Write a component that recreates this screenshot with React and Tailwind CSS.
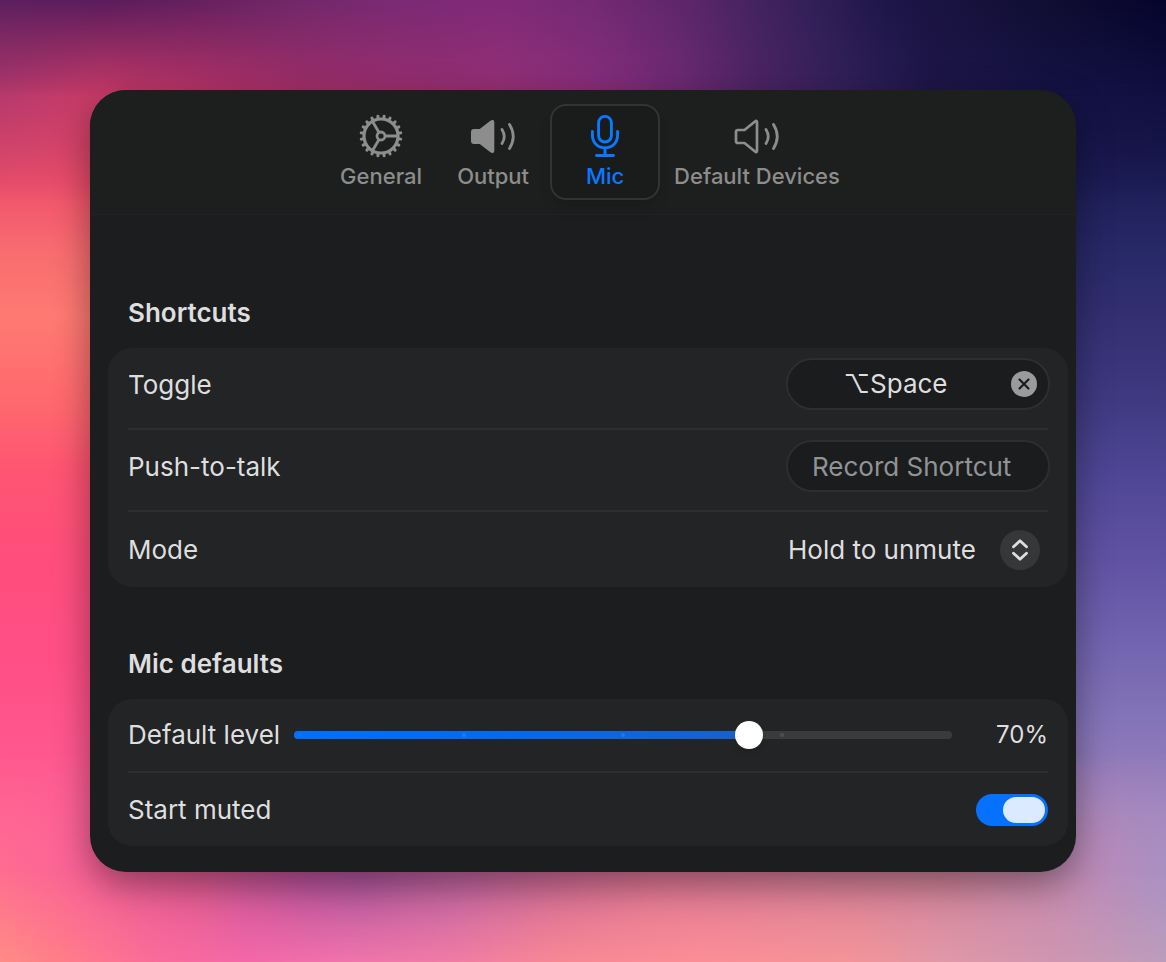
import { useState } from 'react';

const tabs = [
    { id: 'general', label: 'General', icon: GearIcon },
    { id: 'output', label: 'Output', icon: SpeakerFilledIcon },
    { id: 'mic', label: 'Mic', icon: MicIcon },
    { id: 'devices', label: 'Default Devices', icon: SpeakerIcon },
];

// Each layer is a colour ramp that fades in and out along the other axis
const layers = [
    {
        id: 'left',
        vertical: true,
        colors: [[0, '#c83c68'], [0.19, '#ef506a'], [0.26, '#f86c70'], [0.33, '#ff7a72'], [0.42, '#ff686e'], [0.49, '#ff5472'], [0.58, '#ff4e7c'], [0.69, '#ff4f86'], [0.79, '#ff5890'], [0.88, '#ff6498'], [1, '#ff8888']],
        fade: [[0, 1], [1, 1]],
    },
    {
        id: 'right',
        vertical: true,
        colors: [[0, '#0c0a34'], [0.1, '#161346'], [0.19, '#1e1e58'], [0.26, '#272866'], [0.33, '#332f72'], [0.42, '#403a82'], [0.5, '#504796'], [0.58, '#6052a2'], [0.67, '#7264b0'], [0.75, '#8474b8'], [0.83, '#9a80bc'], [0.9, '#b08cbc'], [1, '#bc9cbc']],
        fade: [[0.3, 0], [0.9, 1]],
    },
    {
        id: 'upper',
        colors: [[0, '#b0386c'], [0.09, '#c83a68'], [0.17, '#b83468'], [0.26, '#a02e68'], [0.37, '#962e70'], [0.43, '#963076'], [0.51, '#882e7c'], [0.58, '#702a74'], [0.65, '#4c2464'], [0.73, '#30205a'], [0.8, '#1e1648'], [0.9, '#161346'], [1, '#101040']],
        fade: [[0.08, 1], [0.21, 0]],
    },
    {
        id: 'top',
        colors: [[0, '#5c1f5e'], [0.09, '#5a1c5c'], [0.17, '#64205e'], [0.26, '#72286a'], [0.34, '#7a2a74'], [0.43, '#802a78'], [0.51, '#742a72'], [0.6, '#582668'], [0.69, '#34205a'], [0.76, '#1e1648'], [0.9, '#100e32'], [1, '#06042c']],
        fade: [[0, 1], [0.1, 0]],
    },
    {
        id: 'lower',
        colors: [[0, '#ff6c90'], [0.08, '#f86098'], [0.17, '#dc5890'], [0.26, '#b4509a'], [0.31, '#a8529c'], [0.39, '#b860a0'], [0.47, '#cc6898'], [0.56, '#dc7494'], [0.69, '#d87c98'], [0.81, '#d08098'], [0.9, '#c488ac'], [0.94, '#b98ab8'], [1, '#a890c4']],
        fade: [[0.78, 0], [0.92, 1]],
    },
    {
        id: 'bottom',
        colors: [[0, '#ff8c86'], [0.05, '#ff7e88'], [0.13, '#fa6c98'], [0.21, '#f468a8'], [0.3, '#f074ac'], [0.39, '#f07ca4'], [0.48, '#f88894'], [0.6, '#fc8e96'], [0.73, '#f49498'], [0.81, '#e098a8'], [0.9, '#d096b0'], [1, '#bc9cbc']],
        fade: [[0.9, 0], [1, 1]],
    },
];

function Wallpaper() {
    return (
        <svg className="absolute inset-0 h-full w-full" viewBox="0 0 100 100" preserveAspectRatio="none" aria-hidden="true">
            {layers.map(({ id, vertical, colors, fade }) => (
                <g key={id}>
                    <linearGradient id={`${id}-color`} x1="0" y1="0" x2={vertical ? 0 : 1} y2={vertical ? 1 : 0}>
                        {colors.map(([offset, color]) => (
                            <stop key={offset} offset={offset} stopColor={color} />
                        ))}
                    </linearGradient>
                    <linearGradient id={`${id}-fade`} x1="0" y1="0" x2={vertical ? 1 : 0} y2={vertical ? 0 : 1}>
                        {fade.map(([offset, opacity]) => (
                            <stop key={offset} offset={offset} stopColor="#fff" stopOpacity={opacity} />
                        ))}
                    </linearGradient>
                    <mask id={`${id}-mask`}>
                        <rect width="100" height="100" fill={`url(#${id}-fade)`} />
                    </mask>
                    <rect width="100" height="100" fill={`url(#${id}-color)`} mask={`url(#${id}-mask)`} />
                </g>
            ))}
        </svg>
    );
}

function GearIcon() {
    const teeth = Array.from({ length: 20 }, (_, i) => i * 18 + 9);

    return (
        <svg className="h-11 w-11" viewBox="0 0 44 44" fill="none" stroke="currentColor" aria-hidden="true">
            <circle cx="22" cy="22" r="17" strokeWidth="3.2" />
            {teeth.map((angle) => (
                <path key={angle} d="M22 4.5V2" strokeWidth="3" strokeLinecap="round" transform={`rotate(${angle} 22 22)`} />
            ))}
            <circle cx="22" cy="22" r="4" strokeWidth="2.8" />
            <path d="M26 22H38M20 18.5L13.6 7.5M20 25.5L13.6 36.5" strokeWidth="2.8" />
        </svg>
    );
}

function SpeakerWaves() {
    return (
        <path d="M33 15.500Q37.500 22.500 33 29.500M40.500 10.500Q48 22.500 40.500 34.500" strokeWidth="2.800" strokeLinecap="round" />
    );
}

function SpeakerFilledIcon() {
    return (
        <svg className="h-11 w-12" viewBox="0 0 48 44" fill="none" stroke="currentColor" aria-hidden="true">
            <path d="M5 16H11L22 7.500Q24.300 6 24.300 8.500V36.500Q24.300 39 22 37.500L11 29H5Q3 29 3 27V18Q3 16 5 16Z" fill="currentColor" strokeWidth="2" strokeLinejoin="round" />
            <SpeakerWaves />
        </svg>
    );
}

function SpeakerIcon() {
    return (
        <svg className="h-11 w-12" viewBox="0 0 48 44" fill="none" stroke="currentColor" aria-hidden="true">
            <path d="M5 16H11.500L22 7.500Q24 6 24 8.500V36.500Q24 39 22 37.500L11.500 29H5Q3 29 3 27V18Q3 16 5 16Z" strokeWidth="2.700" strokeLinejoin="round" />
            <SpeakerWaves />
        </svg>
    );
}

function MicIcon() {
    return (
        <svg className="h-11 w-11" viewBox="0 0 44 44" fill="none" stroke="currentColor" strokeWidth="2.9" strokeLinecap="round" aria-hidden="true">
            <rect x="15.600" y="2.400" width="12.800" height="25.600" rx="6.400" />
            <path d="M9.400 17.500V21C9.400 28.500 14.500 33.800 22 33.800S34.600 28.500 34.600 21V17.500M22 34V41M13.500 41.500H30.500" />
        </svg>
    );
}

function Section({ title, children }) {
    return (
        <section>
            <h2 className="px-5 text-[26px] leading-8 font-semibold">{title}</h2>
            <div className="mt-[19px] rounded-3xl bg-[#232426] px-5">{children}</div>
        </section>
    );
}

export default function App() {
    const [activeTab, setActiveTab] = useState('mic');
    const [shortcut, setShortcut] = useState('⌥Space');
    const [level, setLevel] = useState(70);
    const [muted, setMuted] = useState(true);

    return (
        <div className="relative isolate min-h-screen overflow-hidden p-[90px] font-['Inter',sans-serif] text-[#dededf]">
            <Wallpaper />

            <main className="relative overflow-hidden rounded-[36px] bg-[#1c1d1f] pb-[26px] shadow-[0_12px_36px_rgba(0,0,0,0.4)]">
                <nav className="flex justify-center gap-0.5 border-b border-[#212224] bg-[#1d1f1e] pt-[14px] pb-[14px] pl-3" aria-label="Settings">
                    {tabs.map(({ id, label, icon: Icon }) => (
                        <button
                            key={id}
                            onClick={() => setActiveTab(id)}
                            aria-current={activeTab === id ? 'page' : undefined}
                            className={`flex h-24 min-w-[110px] flex-col items-center rounded-2xl border-2 px-[10px] pt-2 text-[22px] leading-7 font-medium ${
                                activeTab === id ? 'border-[#323433] bg-[#1a1c1b] text-[#0a78ff] shadow-lg' : 'border-transparent text-[#8c8d8c]'
                            }`}
                        >
                            <Icon />
                            <span className="mt-1">{label}</span>
                        </button>
                    ))}
                </nav>

                <div className="flex flex-col gap-[61px] pt-[82px] pr-2 pl-[18px]">
                    <Section title="Shortcuts">
                        <div className="flex h-[82px] items-start justify-between border-b-2 border-[#2d2e30] pt-[10px]">
                            <label htmlFor="toggle" className="pt-[11px] text-[26px] leading-8">Toggle</label>
                            <div className="-mr-[2px] flex h-[52px] w-[264px] items-center rounded-full border-2 border-[#2d2e30] bg-[#1b1c1e] pr-[11px] pl-6">
                                <input
                                    id="toggle"
                                    value={shortcut}
                                    readOnly
                                    className="w-full min-w-0 bg-transparent pr-8 text-center text-[26px] leading-8 outline-none"
                                />
                                <button onClick={() => setShortcut('')} aria-label="Clear shortcut" className="shrink-0 text-[#9a9b9b]">
                                    <svg className="h-[26px] w-[26px]" viewBox="0 0 26 26" aria-hidden="true">
                                        <circle cx="13" cy="13" r="13" fill="currentColor" />
                                        <path d="M8.500 8.500L17.500 17.500M17.500 8.500L8.500 17.500" stroke="#1b1c1e" strokeWidth="2.200" strokeLinecap="round" />
                                    </svg>
                                </button>
                            </div>
                        </div>
                        <div className="flex h-[82px] items-start justify-between border-b-2 border-[#2d2e30] pt-[10px]">
                            <label htmlFor="push" className="pt-[11px] text-[26px] leading-8">Push-to-talk</label>
                            <input
                                id="push"
                                placeholder="Record Shortcut"
                                className="-mr-[2px] h-[52px] w-[264px] rounded-full border-2 border-[#2d2e30] bg-[#1b1c1e] pr-6 pl-6 text-[26px] leading-8 outline-none placeholder:text-[#929394]"
                            />
                        </div>
                        <div className="flex h-[75px] items-center justify-between">
                            <label htmlFor="mode" className="text-[26px] leading-8">Mode</label>
                            <div className="relative flex items-center pr-2">
                                <select id="mode" className="appearance-none bg-transparent pr-16 text-[26px] leading-8 outline-none">
                                    <option>Hold to unmute</option>
                                </select>
                                <span className="pointer-events-none absolute right-2 flex h-10 w-10 items-center justify-center rounded-full bg-[#363739]">
                                    <svg className="h-6 w-5" viewBox="0 0 20 24" fill="none" stroke="currentColor" strokeWidth="2.800" strokeLinecap="round" strokeLinejoin="round" aria-hidden="true">
                                        <path d="M3.500 8.800L10 2.800L16.500 8.800M3.500 15.200L10 21.200L16.500 15.200" />
                                    </svg>
                                </span>
                            </div>
                        </div>
                    </Section>

                    <Section title="Mic defaults">
                        <div className="flex h-[74px] items-center border-b-2 border-[#2d2e30]">
                            <label htmlFor="level" className="w-[166px] shrink-0 text-[26px] leading-8">Default level</label>
                            <div className="relative flex h-7 flex-1 items-center">
                                <div className="h-2 w-full overflow-hidden rounded-full bg-[#3a3b3c]">
                                    <div className="h-full bg-linear-to-r from-[#0070ff] via-[#0668ee] to-[#1860c8]" style={{ width: `${level}%` }} />
                                </div>
                                <div className="absolute inset-x-[13px] flex justify-evenly">
                                    <span className="h-1 w-1 rounded-full bg-white/10" />
                                    <span className="h-1 w-1 rounded-full bg-white/10" />
                                    <span className="h-1 w-1 rounded-full bg-white/10" />
                                </div>
                                <input
                                    id="level"
                                    type="range"
                                    value={level}
                                    onChange={(e) => setLevel(Number(e.target.value))}
                                    className="absolute inset-0 h-7 w-full appearance-none bg-transparent [&::-webkit-slider-thumb]:h-7 [&::-webkit-slider-thumb]:w-7 [&::-webkit-slider-thumb]:appearance-none [&::-webkit-slider-thumb]:rounded-full [&::-webkit-slider-thumb]:bg-white [&::-webkit-slider-thumb]:shadow-md"
                                />
                            </div>
                            <output htmlFor="level" className="w-24 text-right text-[24px] leading-8">{level}%</output>
                        </div>
                        <div className="flex h-[73px] items-center justify-between">
                            <label htmlFor="muted" className="text-[26px] leading-8">Start muted</label>
                            <input
                                id="muted"
                                type="checkbox"
                                role="switch"
                                checked={muted}
                                onChange={(e) => setMuted(e.target.checked)}
                                className="flex h-8 w-[72px] appearance-none items-center rounded-full bg-[#3a3b3c] px-[3px] before:h-[26px] before:w-[42px] before:rounded-full before:bg-[#dbeaff] checked:justify-end checked:bg-[#0671ff]"
                            />
                        </div>
                    </Section>
                </div>
            </main>
        </div>
    );
}
